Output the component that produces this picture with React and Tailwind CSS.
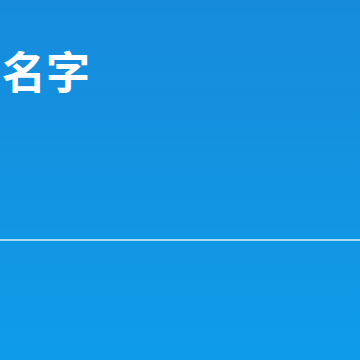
export default function App() {
  return (
    <div className="w-[360px] h-[360px] overflow-hidden bg-gradient-to-b from-[#168bdb] to-[#0e9ce8] flex flex-col" style={{ fontFamily: '"Noto Sans CJK SC", "Noto Sans", sans-serif' }}>
      <div className="h-[239px] pt-[40px] pl-[2px]">
        <h1 className="text-[44px] leading-[60px] font-bold text-white">名字</h1>
      </div>
      <div className="h-[2px] bg-[#a9dcf2]" />
      <div className="flex-1" />
    </div>
  );
}
